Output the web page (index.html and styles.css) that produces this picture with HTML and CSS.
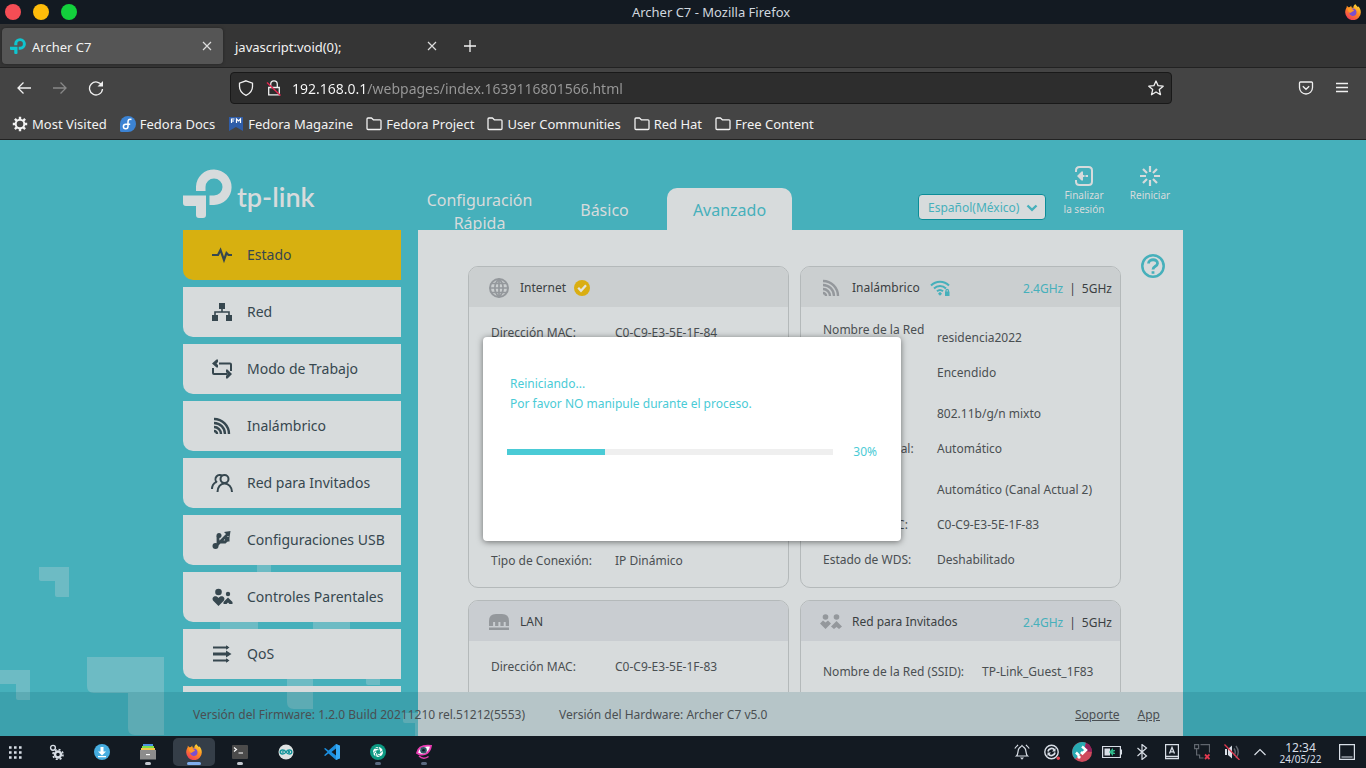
FILE: index.html
```html
<!DOCTYPE html>
<html lang="es">
<head>
<meta charset="utf-8">
<meta name="viewport" content="width=device-width, initial-scale=1">
<title>Archer C7</title>
<link rel="stylesheet" href="styles.css">
</head>
<body>
<svg class="defs" aria-hidden="true">
  <defs>
    <linearGradient id="ffBody" x1="0.8" y1="0" x2="0.2" y2="1"><stop offset="0" stop-color="#ffe13a"/><stop offset="0.45" stop-color="#ff8c1f"/><stop offset="1" stop-color="#f0335f"/></linearGradient>
    <symbol id="firefox" viewBox="0 0 16 16">
      <path fill="url(#ffBody)" d="M10.3 0c.4 1.200 1.600 1.900 2.700 3.200l.2-.9c1.700 1.700 2.600 3.700 2.600 6A7.800 7.700 0 0 1 .2 8.600C.1 6.300.9 4.400 1.700 3.200l.1-1.400 1.600 1.500 1.700-.2c.3-.9 1.200-1.300 1.200-1.300l.1 1.500 1.900.6C8.200 2.300 9.300.7 10.300 0z"/>
      <path fill="#7a4fd0" d="M6.500 4.800c3-.9 5.300 1.200 5 3.900-.2 2.400-2.300 3.600-4.300 3.200-2-.5-3.200-2-2.800-3.900 1 .8 2 .5 2.700-.2.700-.6 1.700-.5 1.700-1.100 0-.5-1.200-1.100-2.300-1.900z"/>
      <path fill="#ff9a25" d="M2.600 4.100c1.800-.2 3.400.2 4.500 1.400l1.600.6c.2.900-1.700 1-2 1.700-.6 1-1.800 1.500-2.600.4-.8-1-1.500-2.500-1.500-4.100z"/>
    </symbol>
    <symbol id="tplink" viewBox="0 0 49 49">
      <path d="M13 22v-4.500A17.800 17.800 0 1 1 31 36h-4.500V26.500H31A8.500 8.500 0 1 0 22.500 18v4z"/>
      <path d="M0 26.500h23V46a3 3 0 0 1-3 3h-4a3 3 0 0 1-3-3v-9H3a3 3 0 0 1-3-3z"/>
    </symbol>
    <symbol id="folder" viewBox="0 0 16 16"><path fill="none" stroke="currentColor" stroke-width="1.300" stroke-linejoin="round" d="M1 12.500V3q0-1 1-1h3.500l1.800 1.800H14q1 0 1 1v7.700q0 1-1 1H2q-1 0-1-1z"/></symbol>
    <symbol id="close" viewBox="0 0 10 10"><path d="M1 1l8 8M9 1L1 9" stroke="currentColor" stroke-width="1.200"/></symbol>
    <symbol id="rss" viewBox="0 0 18 18"><g fill="none" stroke="currentColor" stroke-width="2.400"><path d="M1 14a3 3 0 0 1 3 3M1 10a7 7 0 0 1 7 7M1 6a11 11 0 0 1 11 11M1 2a15 15 0 0 1 15 15"/></g></symbol>
  </defs>
</svg>

<header class="titlebar">
  <div class="lights">
    <button class="light red" aria-label="Cerrar"></button>
    <button class="light yellow" aria-label="Minimizar"></button>
    <button class="light green" aria-label="Maximizar"></button>
  </div>
  <span class="window-title">Archer C7 - Mozilla Firefox</span>
  <svg class="i16 title-icon"><use href="#firefox"/></svg>
</header>

<div class="tabstrip">
  <div class="tab current">
    <svg class="i16 cyan"><use href="#tplink"/></svg>
    <span class="tab-name">Archer C7</span>
    <button class="tab-close" aria-label="Cerrar pestaña"><svg class="i10"><use href="#close"/></svg></button>
  </div>
  <div class="tab">
    <span class="tab-name">javascript:void(0);</span>
    <button class="tab-close" aria-label="Cerrar pestaña"><svg class="i10"><use href="#close"/></svg></button>
  </div>
  <button class="new-tab" aria-label="Nueva pestaña"><svg class="i14" viewBox="0 0 14 14"><path d="M7 1v12M1 7h12" stroke="currentColor" stroke-width="1.300"/></svg></button>
</div>

<nav class="toolbar">
  <div class="nav-buttons">
    <button class="tool" aria-label="Atrás"><svg class="i16" viewBox="0 0 16 16"><path class="line" d="M15 8H2M7.500 2.500L2 8l5.500 5.500"/></svg></button>
    <button class="tool dim" aria-label="Adelante"><svg class="i16" viewBox="0 0 16 16"><path class="line" d="M1 8h13M8.500 2.500L14 8l-5.500 5.500"/></svg></button>
    <button class="tool" aria-label="Recargar"><svg class="i16" viewBox="0 0 16 16"><path class="line" d="M13.800 5.500A6.500 6.500 0 1 0 14.500 9"/><path fill="currentColor" d="M15 1v5.500H9.500z"/></svg></button>
  </div>
  <div class="urlbar">
    <svg class="i16" viewBox="0 0 16 16"><path class="line" d="M8 .8l6.500 2.400v3.300c0 4-2.500 7-6.500 8.800-4-1.800-6.500-4.800-6.500-8.800V3.200z"/></svg>
    <svg class="i16 lock" viewBox="0 0 16 16"><path class="line" d="M2.700 7.500h10.600v7.300H2.700zM4.700 7.500V4.200a3.300 3.300 0 0 1 6.600 0v3.300"/><path stroke="#e22850" stroke-width="1.400" d="M1 2.500l13.500 13"/></svg>
    <input class="url" type="text" aria-label="Dirección" value="192.168.0.1/webpages/index.1639116801566.html">
    <svg class="i16" viewBox="0 0 16 16"><path class="line" stroke-linejoin="round" d="M8 1l2.100 4.700 5.100.5-3.900 3.400 1.200 5.100L8 12l-4.500 2.700 1.200-5.100L.8 6.200l5.100-.5z"/></svg>
  </div>
  <div class="nav-end">
    <button class="tool" aria-label="Pocket"><svg class="i16" viewBox="0 0 16 16"><path class="line" d="M2.500 2h11q1 0 1 1v4.500a6.500 6.500 0 0 1-13 0V3q0-1 1-1zM4.800 6.200L8 9.300l3.200-3.100"/></svg></button>
    <button class="tool" aria-label="Menú"><svg class="i16" viewBox="0 0 16 16"><path class="line" d="M2 3.500h12M2 7.500h12M2 11.500h12"/></svg></button>
  </div>
</nav>

<nav class="bookmarks">
  <a href="#"><svg class="i16" viewBox="0 0 16 16"><circle cx="8" cy="8" r="4.300" fill="none" stroke="currentColor" stroke-width="2"/><path stroke="currentColor" stroke-width="2.400" d="M8 .8v3M8 12.200v3M.8 8h3M12.200 8h3M2.900 2.900L5 5M11 11l2.100 2.100M13.100 2.900L11 5M5 11l-2.100 2.100"/></svg>Most Visited</a>
  <a href="#"><svg class="i16" viewBox="0 0 16 16"><path fill="#3c83d3" d="M8 0a8 8 0 1 1 0 16H1.500Q0 16 0 14.500V8a8 8 0 0 1 8-8z"/><path fill="none" stroke="#fff" stroke-width="1.500" d="M11.500 3.500C9 2.500 8 4 8 6v4.500a2.300 2.300 0 1 1-2.300-2.300h4.500"/></svg>Fedora Docs</a>
  <a href="#"><svg class="i16" viewBox="0 0 16 16"><path fill="#2f5da8" d="M1 1h14v14l-7-4-7 4z"/><path fill="none" stroke="#fff" stroke-width="1.200" d="M3.500 7V3h3M3.500 5h2.500M8.500 7V3l2 2 2-2v4"/></svg>Fedora Magazine</a>
  <a href="#"><svg class="i16"><use href="#folder"/></svg>Fedora Project</a>
  <a href="#"><svg class="i16"><use href="#folder"/></svg>User Communities</a>
  <a href="#"><svg class="i16"><use href="#folder"/></svg>Red Hat</a>
  <a href="#"><svg class="i16"><use href="#folder"/></svg>Free Content</a>
</nav>

<div class="page">
  <svg class="pattern" viewBox="0 0 420 176" aria-hidden="true">
    <path d="M39 7h30v30H57q-2 0-2-2V21H41q-2 0-2-2zM0 110h30v30H18q-2 0-2-2v-14H0zM87 97h77v78h-29q-7 0-7-7v-35H94q-7 0-7-7zM257 0h14v20h-14zM220 60h38v12h-38zM313 60h37v12h-37zM287 115h26v34h-19q-7 0-7-7zM366 115h14v10h-12q-2 0-2-2zM403 153h15v23h-3v-13h-10q-2 0-2-2z"/>
  </svg>

  <div class="frame">
    <header class="top">
      <a class="brand" href="#" aria-label="tp-link"><svg class="brand-mark"><use href="#tplink"/></svg><span class="brand-name">tp-link</span></a>
      <nav class="modes">
        <a class="mode tall" href="#">Configuración Rápida</a>
        <a class="mode" href="#">Básico</a>
        <a class="mode active" href="#">Avanzado</a>
      </nav>
      <div class="tools">
        <label class="language">
          <select aria-label="Idioma"><option>Español(México)</option></select>
          <svg class="chevron" viewBox="0 0 12 8"><path fill="none" stroke="currentColor" stroke-width="2.400" d="M1.500 1.500L6 5.800l4.500-4.300"/></svg>
        </label>
        <button class="action"><svg class="i20" viewBox="0 0 20 20"><g fill="none" stroke="currentColor" stroke-width="2"><path d="M2 6V4.500Q2 1 5.500 1h9Q18 1 18 4.500v11q0 3.500-3.500 3.500h-9Q2 19 2 15.500V14"/><path d="M14 10h-2.500"/></g><path fill="currentColor" d="M3 10l4.500-4.500H9V9h1.500v2H9v3.500H7.500z"/></svg>Finalizar<br>la sesión</button>
        <button class="action"><svg class="i20" viewBox="0 0 20 20"><path stroke="currentColor" stroke-width="2.200" d="M10 0v6M10 14v6M0 10h6M14 10h6M3 3l4 4M13 13l4 4M17 3l-4 4M7 13l-4 4"/></svg>Reiniciar</button>
      </div>
    </header>

    <div class="columns">
      <nav class="side">
        <a class="side-item selected" href="#"><svg class="i22" viewBox="0 0 22 22"><path fill="none" stroke="currentColor" stroke-width="2.200" d="M1 11h6l2.500-5 3.500 10 2.500-7 2 2H21"/></svg>Estado</a>
        <a class="side-item" href="#"><svg class="i22" viewBox="0 0 22 22"><path fill="currentColor" d="M8 2h6v6H8zM1 14h6v6H1zM15 14h6v6h-6z"/><path fill="none" stroke="currentColor" stroke-width="1.600" d="M11 8v3M4 14v-3h14v3"/></svg>Red</a>
        <a class="side-item" href="#"><svg class="i22" viewBox="0 0 22 22"><path fill="none" stroke="currentColor" stroke-width="2" d="M2 10v5q0 1 1 1h13M8 5.500h11q1 0 1 1V13"/><path fill="currentColor" d="M1 5.500L5.500 1.500H7V4L5.500 5.500 7 7v2.500H5.500zM21 16l-4.500 4.500H15V18l1.500-2-1.500-2v-2.500h1.500z"/></svg>Modo de Trabajo</a>
        <a class="side-item" href="#"><svg class="i22" viewBox="-2 -2 22 22"><use href="#rss" width="18" height="18"/></svg>Inalámbrico</a>
        <a class="side-item" href="#"><svg class="i22" viewBox="0 0 22 22"><g fill="none" stroke="currentColor" stroke-width="2"><path d="M1 17c0-3 1.500-5.500 4-7M6 10.500A4.200 4.200 0 1 1 11.500 4"/><circle cx="13.500" cy="7" r="4"/><path d="M6.500 20c0-5 3-8.500 7-8.500s7.500 3.500 7.500 8.500"/></g></svg>Red para Invitados</a>
        <a class="side-item" href="#"><svg class="i22" viewBox="0 0 22 22"><path fill="none" stroke="currentColor" stroke-width="2.800" d="M4 18L17 5M7 15V7M9 13h5l2-2"/><path fill="currentColor" d="M19.500 2l-1 6.500-5.500-5.500z"/><circle cx="4.500" cy="17" r="3" fill="currentColor"/><circle cx="8" cy="6.500" r="2.500" fill="currentColor"/><path fill="currentColor" d="M14 8h4.500v4.500H14z"/></svg>Configuraciones USB</a>
        <a class="side-item" href="#"><svg class="i22" viewBox="0 0 22 22"><g fill="currentColor"><circle cx="7.500" cy="6" r="3.300"/><path d="M7.500 20l-5.500-5.500c-2-3.500 3-6 5.500-2.500 2.500-3.500 7.500-1 5.500 2.500z"/><circle cx="17" cy="8" r="2.200"/><path d="M17 11.500l4.500 4.500v2h-3l-1.500-1.500-1.500 1.500h-3v-2z"/></g></svg>Controles Parentales</a>
        <a class="side-item" href="#"><svg class="i22" viewBox="0 0 22 22"><path stroke="currentColor" stroke-width="2.200" d="M2 4.500h15M2 17.500h15"/><path stroke="currentColor" stroke-width="3" d="M2 11h15"/><path fill="currentColor" d="M15 2.300l3.500 2.200L15 6.700zM15 7.500L20.500 11 15 14.500zM15 15.300l3.500 2.200-3.500 2.200z"/></svg>QoS</a>
        <span class="side-item"></span>
      </nav>

      <main class="main">
        <div class="cards">
          <section class="card">
            <h2><span class="card-icon"><svg class="i20" viewBox="0 0 20 20"><circle cx="10" cy="10" r="9" fill="none" stroke="currentColor" stroke-width="2"/><path fill="none" stroke="currentColor" stroke-width="1.700" d="M1 10h18M3 5.500h14M3 14.500h14M10 1v18M10 1C4.500 6 4.500 14 10 19M10 1c5.500 5 5.500 13 0 18"/></svg></span>Internet<svg class="i16 ok" viewBox="0 0 16 16"><circle cx="8" cy="8" r="8" fill="#daae12"/><path fill="none" stroke="#e4e4dc" stroke-width="2.300" d="M4.200 7.800l2.800 3 5-5.500"/></svg></h2>
            <dl class="rows spread">
              <div class="row"><dt>Dirección MAC:</dt><dd>C0-C9-E3-5E-1F-84</dd></div>
              <div class="row"><dt>Tipo de Conexión:</dt><dd>IP Dinámico</dd></div>
            </dl>
          </section>

          <section class="card">
            <h2><span class="card-icon"><svg class="i18"><use href="#rss"/></svg></span>Inalámbrico<svg class="i20 wifi" viewBox="0 0 20 20"><path fill="none" stroke="currentColor" stroke-width="2" d="M1 7.500a12.500 12.500 0 0 1 18 0M4 10.500a8.500 8.500 0 0 1 12 0M7 13.300a4.500 4.500 0 0 1 6 0"/><path fill="currentColor" d="M10 13.800l2 2-2 2-2-2zM15 13.500h4.500V18H15z"/><path fill="none" stroke="currentColor" stroke-width="1.200" d="M16 14v-1.500a1.200 1.200 0 0 1 2.400 0V14"/></svg>
              <span class="bands"><a class="band on" href="#">2.4GHz</a><span>|</span><a class="band" href="#">5GHz</a></span></h2>
            <dl class="rows">
              <div class="row"><dt>Nombre de la Red (SSID):</dt><dd>residencia2022</dd></div>
              <div class="row"><dt></dt><dd>Encendido</dd></div>
              <div class="row wide"><dt></dt><dd>802.11b/g/n mixto</dd></div>
              <div class="row"><dt>Ancho de Canal:</dt><dd>Automático</dd></div>
              <div class="row wide"><dt></dt><dd>Automático (Canal Actual 2)</dd></div>
              <div class="row"><dt>Dirección MAC:</dt><dd>C0-C9-E3-5E-1F-83</dd></div>
              <div class="row"><dt>Estado de WDS:</dt><dd>Deshabilitado</dd></div>
            </dl>
          </section>

          <section class="card cool">
            <h2><span class="card-icon"><svg class="i20" viewBox="0 0 20 20"><path fill="currentColor" d="M0 14V9q0-7 7-7h6q7 0 7 7v5h-3.300v-4h-2v4h-3.300v-4h-2v4H6.100v-4h-2v4zM0 15.500h20V18H0z"/></svg></span>LAN</h2>
            <dl class="rows spread">
              <div class="row"><dt>Dirección MAC:</dt><dd>C0-C9-E3-5E-1F-83</dd></div>
            </dl>
          </section>

          <section class="card cool">
            <h2><span class="card-icon"><svg class="i22" viewBox="0 0 22 22"><g fill="currentColor"><circle cx="5.500" cy="6" r="2.800"/><circle cx="16.500" cy="6" r="2.800"/><path d="M5.500 18L0 12.500 3 9.500l2.500 2 2.500-2 3 3zM16.500 10l5.500 5.500-3 2.500-2.500-2-2.500 2-3-2.500z"/></g></svg></span>Red para Invitados
              <span class="bands"><a class="band on" href="#">2.4GHz</a><span>|</span><a class="band" href="#">5GHz</a></span></h2>
            <dl class="rows guest">
              <div class="row"><dt>Nombre de la Red (SSID):</dt><dd>TP-Link_Guest_1F83</dd></div>
            </dl>
          </section>
        </div>
        <button class="help" aria-label="Ayuda"><svg class="i24" viewBox="0 0 24 24"><g fill="none" stroke="currentColor"><circle cx="12" cy="12" r="10.700" stroke-width="2.500"/><path stroke-width="2.800" d="M7.500 9.500c.2-5 9.200-5 9 0-.1 3-4.500 2.500-4.500 6M12 17.200v2.500"/></g></svg></button>
      </main>
    </div>
  </div>

  <footer class="foot">
    <div class="foot-in">
      <span>Versión del Firmware: 1.2.0 Build 20211210 rel.51212(5553)</span>
      <span>Versión del Hardware: Archer C7 v5.0</span>
      <span class="foot-links"><a href="#">Soporte</a><a href="#">App</a></span>
    </div>
  </footer>

  <div class="dialog" role="dialog" aria-labelledby="dlg-text">
    <p id="dlg-text">Reiniciando...<br>Por favor NO manipule durante el proceso.</p>
    <div class="progress">
      <div class="track"><div class="fill" style="width: 30%"></div></div>
      <span>30%</span>
    </div>
  </div>
</div>

<footer class="taskbar">
  <button class="menu" aria-label="Aplicaciones"><svg class="i16" viewBox="0 0 16 16"><path stroke="#d8dee6" stroke-width="2.600" stroke-dasharray="2.600 2.400" d="M2 3.500h13M2 8.500h13M2 13.500h13"/></svg></button>
  <button class="app" aria-label="Configuración"><svg class="i16" viewBox="0 0 16 16"><g fill="none" stroke="#d8dee6"><circle cx="10" cy="10.500" r="3" stroke-width="2.400"/><circle cx="10" cy="10.500" r="5" stroke-width="1.600" stroke-dasharray="2 1.930"/><circle cx="5" cy="3.800" r="2.400" stroke-width="1.400"/></g></svg></button>
  <button class="app" aria-label="Descargas"><svg class="i16" viewBox="0 0 16 16"><circle cx="8" cy="8" r="8" fill="#46ade0"/><path fill="#fff" d="M6.500 3h3v4.500H12L8 11.500l-4-4h2.500zM4 12h8v1.200H4z"/></svg></button>
  <button class="app run" aria-label="Archivos"><svg class="i16" viewBox="0 0 16 16"><path fill="#4a90e2" d="M3 0h10v2H3z"/><path fill="#7fe04a" d="M2 2h12v2H2z"/><path fill="#f3c64c" d="M1 4h14v2H1z"/><path fill="#8c8c8c" d="M0 6h16v9.500H0z"/><path fill="#fff" d="M6 10h4v1.200H6z"/></svg></button>
  <button class="app run focus" aria-label="Firefox"><svg class="i16"><use href="#firefox"/></svg></button>
  <button class="app run" aria-label="Terminal"><svg class="i16" viewBox="0 0 16 16"><rect y="1" width="16" height="14" rx="1" fill="#4b4b4b"/><path fill="none" stroke="#fff" stroke-width="1.200" d="M2 3.500l2.500 2L2 7.500M6.500 9H11"/></svg></button>
  <button class="app" aria-label="Arduino"><svg class="i16" viewBox="0 0 16 16"><circle cx="8" cy="8" r="7.500" fill="#dfe3e3"/><path fill="none" stroke="#14959b" stroke-width="1.400" d="M8 8c-1.500-2.600-5.800-2.600-5.800 0s4.300 2.600 5.800 0 5.800-2.600 5.800 0-4.300 2.600-5.800 0M3.800 8h2M10 8h2M11 7v2"/></svg></button>
  <button class="app" aria-label="Code"><svg class="i16" viewBox="0 0 16 16"><path fill="#1c8ede" d="M12 0l4 1.700v12.600L12 16 4.500 9.500 1.200 12 0 11.300 3.500 8 0 4.700 1.200 4l3.300 2.500zm0 4.500L7.500 8l4.500 3.500z"/><path fill="#35a9f5" d="M12 0l4 1.700v12.600L12 16z"/></svg></button>
  <button class="app run quiet" aria-label="Obturador"><svg class="i16" viewBox="0 0 16 16"><circle cx="8" cy="8" r="8" fill="#0d9a83"/><circle cx="8" cy="8" r="3.500" fill="none" stroke="#fff" stroke-width="3"/><path stroke="#0d9a83" stroke-width=".9" d="M8 2.500L10 8M13.500 6L9 10M11.500 13L7 10.500M6 13.500L5.500 9M2.500 10L6 6.500M4 4l5 1"/></svg></button>
  <button class="app run quiet" aria-label="Visor"><svg class="i16" viewBox="0 0 16 16"><path fill="#fff" stroke="#e83bb2" stroke-width="1.800" d="M1 9C2 3 7 1 15 1.800c-.5 3-2 6.500-5.500 8.200C6 11.200 3 10.500 1 9z"/><circle cx="7.500" cy="6.300" r="3.300" fill="#2d5662"/><circle cx="7.500" cy="6.300" r="1.300" fill="#101b24"/><path fill="none" stroke="#e83bb2" stroke-width="1.500" d="M3 12c3 3 7 2.500 9.500.5"/></svg></button>
  <div class="tray">
    <button class="tr" aria-label="Notificaciones"><svg class="i16" viewBox="0 0 16 16"><path fill="none" stroke="#d8dee6" stroke-width="1.200" d="M2.500 12c2-1.500 1-6 2.500-7.500C6 3 7 3 8 1.500 9 3 10 3 11 4.500c1.500 1.500.5 6 2.500 7.500zM2.800 2L.8 4.500M13.200 2l2 2.500M4 .8L3 2M12 .8L13 2"/><path fill="#d8dee6" d="M6 13.500h4L8 15.800z"/></svg></button>
    <button class="tr" aria-label="Actualizaciones"><svg class="i16" viewBox="0 0 16 16"><g fill="none" stroke="#d8dee6"><circle cx="7.500" cy="8" r="6.700" stroke-width="1.400"/><path stroke-width="1.800" d="M4 7.500a3.600 3.600 0 0 1 6.500-1.500M11 8.500A3.600 3.600 0 0 1 4.500 10"/></g><path fill="#d8dee6" d="M11.500 4v3.500H8zM3.500 12V8.500H7z"/><circle cx="14.300" cy="14.300" r="1.700" fill="#e2434f"/></svg></button>
    <button class="tr" aria-label="Ayuda"><svg class="i20" viewBox="0 0 20 20"><circle cx="10" cy="10" r="10" fill="#cf4a5c"/><path fill="#27aab2" d="M3 17A10 10 0 0 1 14 .8L12 9z"/><path fill="#93205a" d="M14 .8A10 10 0 0 1 20 10l-8-1z"/><path fill="none" stroke="#fff" stroke-width="2.500" d="M10 4.500l4 3.500-3.500 3.500L9 10M4 10.500l3 3"/><circle cx="7" cy="15" r="1.700" fill="#fff"/></svg></button>
    <button class="tr" aria-label="Batería"><svg class="i20" viewBox="0 0 20 20"><path fill="none" stroke="#d8dee6" stroke-width="1.200" d="M.6 4.500h17.800v11H.6zM18.500 8h1v4h-1"/><path fill="#d8dee6" d="M2.500 6.500H8v7H2.500z"/><path fill="#2fb98a" d="M7 10l4-4v2h2v1.300h-1.500v1.400H13V12h-2v2z"/></svg></button>
    <button class="tr" aria-label="Bluetooth"><svg class="i16" viewBox="0 0 16 16"><path fill="none" stroke="#d8dee6" stroke-width="1.200" d="M3.500 4l9 8L8 15.500V.5L12.500 4l-9 8"/></svg></button>
    <button class="tr" aria-label="Teclado"><svg class="i16" viewBox="0 0 16 16"><path fill="none" stroke="#d8dee6" stroke-width="1.200" d="M1.600.6h12.800v14H1.600z"/><path fill="none" stroke="#d8dee6" stroke-width="1.300" d="M5.500 9.500L8 3.500l2.500 6M6.500 7.800h3M2 12.500h12"/></svg></button>
    <button class="tr" aria-label="Red"><svg class="i16" viewBox="0 0 16 16"><path fill="none" stroke="#60666e" stroke-width="1.200" d="M.6.6h4v4h-4zM6.500.6h9v8M2.600 5v6h3v3h4"/><path stroke="#e23950" stroke-width="1.800" d="M11 10.500l4.500 4.500M15.500 10.500L11 15"/></svg></button>
    <button class="tr" aria-label="Volumen"><svg class="i16" viewBox="0 0 16 16"><path fill="#d8dee6" d="M1 5h2v6H1zM4 5l4-3.500v13L4 11z"/><path fill="none" stroke="#60666e" stroke-width="1.400" d="M10 4.500q2.500 3.500 0 7M12 2q4.500 6 0 12"/><path stroke="#e23950" stroke-width="1.300" d="M.5.500L15.500 16"/></svg></button>
    <button class="tr narrow" aria-label="Mostrar ocultos"><svg class="i14" viewBox="0 0 14 14"><path fill="none" stroke="#d8dee6" stroke-width="1.200" d="M1.500 10L7 4.500l5.500 5.500"/></svg></button>
  </div>
  <div class="clock"><time class="hour">12:34</time><time class="date">24/05/22</time></div>
  <button class="desk" aria-label="Mostrar escritorio"><svg class="i16" viewBox="0 0 16 16"><path fill="none" stroke="#d8dee6" stroke-width="1.200" d="M.6.6h14.800v14.800H.6zM2.500 13h11"/></svg></button>
</footer>
</body>
</html>
```
FILE: styles.css
```css
* { box-sizing: border-box; }

body {
  margin: 0;
  height: 100vh;
  overflow: hidden;
  display: flex;
  flex-direction: column;
  font: 12px/20px "Noto Sans", sans-serif;
  background: #131a22;
}

button {
  margin: 0;
  padding: 0;
  border: 0;
  background: none;
  color: inherit;
  font: inherit;
}

a { color: inherit; text-decoration: none; }
svg { display: block; flex: none; fill: currentColor; }

.defs { position: absolute; width: 0; height: 0; }
.i10 { width: 10px; height: 10px; }
.i14 { width: 14px; height: 14px; }
.i16 { width: 16px; height: 16px; }
.i18 { width: 18px; height: 18px; }
.i20 { width: 20px; height: 20px; }
.i22 { width: 22px; height: 22px; }
.i24 { width: 24px; height: 24px; }
.line { fill: none; stroke: currentColor; stroke-width: 1.3; }

/* Window title */
.titlebar {
  flex: none;
  height: 24px;
  padding: 0 5px;
  display: grid;
  grid-template-columns: 1fr auto 1fr;
  align-items: center;
  background: #131a22;
  color: #d0d7df;
  font-size: 13px;
}
.lights { display: flex; gap: 12px; }
.light { width: 16px; height: 16px; border-radius: 50%; }
.red { background: #f54d55; }
.yellow { background: #febc0a; }
.green { background: #13d13c; }
.window-title { padding-left: 56px; }
.title-icon { justify-self: end; }

/* Tabs */
.tabstrip {
  flex: none;
  height: 44px;
  padding: 4px 2px;
  display: flex;
  align-items: flex-start;
  gap: 4px;
  background: #353535;
  border-bottom: 1px solid #222;
  color: #f2f2f2;
  font-size: 13px;
}
.tab {
  width: 221px;
  height: 36px;
  padding: 0 11px 0 8px;
  display: flex;
  align-items: center;
  gap: 6px;
  border-radius: 4px;
}
.current { background: #555; box-shadow: 0 0 3px #222; }
.cyan { color: #0fc5cf; }
.tab-name { flex: 1; padding-top: 2px; }
.tab-close { color: #ddd; }
.new-tab { width: 36px; height: 36px; display: grid; place-items: center; }

/* Navigation bar */
.toolbar {
  flex: none;
  height: 40px;
  display: flex;
  align-items: center;
  background: #444;
  color: #f0f0f0;
}
.nav-buttons { width: 230px; padding-left: 6px; display: flex; }
.tool { width: 36px; height: 32px; display: grid; place-items: center; }
.dim { color: #888; }
.urlbar {
  flex: 1;
  height: 32px;
  padding: 0 7px;
  display: flex;
  align-items: center;
  gap: 12px;
  background: #2d2d2d;
  border: 1px solid #191919;
  border-radius: 4px;
}
.url {
  flex: 1;
  min-width: 0;
  height: 28px;
  margin-left: -2px;
  padding: 0;
  border: 0;
  outline: 0;
  font: 14px/20px "Noto Sans", sans-serif;
  color: transparent;
  background: linear-gradient(90deg, #fbfbfb 75px, #999 75px);
  -webkit-background-clip: text;
  background-clip: text;
}
.nav-end { width: 194px; padding-right: 6px; display: flex; justify-content: flex-end; }

.bookmarks {
  flex: none;
  height: 32px;
  padding: 0 12px;
  display: flex;
  align-items: center;
  gap: 13px;
  background: #444;
  border-bottom: 1px solid #222;
  color: #f2f2f2;
  font-size: 13px;
}
.bookmarks a { display: flex; align-items: center; gap: 4px; white-space: nowrap; }

/* Router page */
.page {
  position: relative;
  flex: 1;
  min-height: 0;
  overflow: hidden;
  background: #46b0bb;
  color: #4a4f52;
}
.pattern {
  position: absolute;
  left: 0;
  bottom: 0;
  width: 420px;
  height: 176px;
  fill: #d7dbdc;
  opacity: 0.27;
}
.frame {
  position: relative;
  width: min(1000px, 100%);
  height: 100%;
  margin: 0 auto;
  display: flex;
  flex-direction: column;
}
.top { flex: none; height: 90px; display: flex; color: #d7dbdc; }
.brand { width: 234px; padding-top: 29px; display: flex; align-items: flex-start; gap: 5px; }
.brand-mark { width: 49px; height: 49px; }
.brand-name { font: 600 27px/55px Lato, sans-serif; }

.modes { display: flex; align-items: flex-end; font-size: 16px; line-height: 23px; text-align: center; }
.mode {
  width: 125px;
  height: 42px;
  padding-top: 2px;
  overflow: hidden;
  display: flex;
  align-items: center;
  justify-content: center;
}
.tall { padding-top: 1px; align-items: flex-start; }
.active { background: #d7dbdc; color: #46b0bb; border-radius: 10px 10px 0 0; }

.tools { flex: 1; display: flex; justify-content: flex-end; }
.language { position: relative; margin: 54px 16px 0 0; height: 26px; color: #46b0bb; }
.language select {
  width: 128px;
  height: 26px;
  padding: 1px 9px 0;
  appearance: none;
  border: 1px solid #0b8d98;
  border-radius: 4px;
  background: #d7dbdc;
  color: #46b0bb;
  font: 12px/20px "Noto Sans", sans-serif;
}
.chevron { position: absolute; right: 8px; top: 10px; width: 12px; height: 8px; pointer-events: none; }
.action {
  align-self: flex-start;
  width: 44px;
  margin-right: 22px;
  padding-top: 26px;
  display: block;
  font-size: 10px;
  line-height: 14px;
  text-align: center;
}
.action:last-of-type { margin-right: 11px; }
.action svg { margin: 0 auto 2px; }

.columns { flex: 1; min-height: 0; display: flex; gap: 17px; }
.side {
  width: 218px;
  margin-bottom: 44px;
  overflow: hidden;
  display: flex;
  flex-direction: column;
  gap: 7px;
}
.side-item {
  flex: none;
  height: 50px;
  padding-left: 28px;
  display: flex;
  align-items: center;
  gap: 14px;
  border-radius: 0 0 0 10px;
  background: #d7dbdc;
  color: #36474f;
  font-size: 14px;
  white-space: nowrap;
}
.selected { background: #d7b010; }

.main {
  flex: 1;
  display: flex;
  align-items: flex-start;
  gap: 20px;
  padding: 0 18px 44px 50px;
  background: #d7dbdc;
}
.cards {
  flex: 1;
  height: 100%;
  padding-top: 36px;
  overflow: hidden;
  display: grid;
  grid-template-columns: 1fr 1fr;
  grid-auto-rows: max-content;
  align-content: start;
  gap: 12px 11px;
}
.card {
  min-height: 130px;
  display: flex;
  flex-direction: column;
  border: 1px solid #b4b9ba;
  border-radius: 10px;
}
.card h2 {
  flex: none;
  height: 40px;
  margin: 0;
  padding: 1px 8px 0 19px;
  display: flex;
  align-items: center;
  border-radius: 9px 9px 0 0;
  font-size: 12px;
  font-weight: 400;
  color: #3b3f42;
  background: #cbcfd0;
}
.cool h2 { background: #c9cdd1; }
.card-icon { width: 32px; color: #94989c; }
.card-icon .i20 { margin-left: 1px; }
.card-icon .i18 { margin-left: 2px; }
.ok { margin-left: 8px; }
.wifi { margin-left: 10px; color: #46b0bb; }
.bands { margin-left: auto; padding-top: 2px; display: flex; gap: 6px; }
.on { color: #46b0bb; }

.rows {
  flex: 1;
  margin: 0;
  padding: 21px 0 17px 22px;
  display: flex;
  flex-direction: column;
  gap: 15px;
}
.row { height: 20px; display: flex; align-items: center; }
.wide { margin-top: 6px; }
.row dt { width: 114px; padding-right: 12px; line-height: 16px; }
.row dd { margin: 0; }
.spread { padding: 16px 0 16px 22px; justify-content: space-between; }
.spread dt { width: 124px; }
.guest dt { width: 159px; }

.help { margin-top: 24px; color: #46b0bb; }

.foot {
  position: absolute;
  left: 0;
  right: 0;
  bottom: 0;
  background: rgba(14, 88, 99, 0.16);
}
.foot-in {
  width: min(1000px, 100%);
  height: 44px;
  margin: 0 auto;
  padding: 2px 23px 0 10px;
  display: flex;
  align-items: center;
  gap: 34px;
}
.foot-links { margin-left: auto; display: flex; gap: 18px; }
.foot-links a { text-decoration: underline; }

.dialog {
  position: absolute;
  left: calc(50% - 200px);
  top: 197px;
  width: 418px;
  height: 204px;
  padding: 37px 24px;
  background: #fff;
  border-radius: 4px;
  box-shadow: 0 1px 6px rgba(0, 0, 0, 0.5);
  color: #4acbd6;
}
.dialog p { margin: 0 0 28px 3px; }
.progress { display: flex; align-items: center; gap: 20px; }
.track { flex: 1; height: 6px; background: #efefef; }
.fill { height: 100%; background: #4acbd6; }

/* Desktop panel */
.taskbar {
  flex: none;
  height: 32px;
  display: flex;
  align-items: center;
  background: #131a22;
  color: #d8dee6;
}
.menu { width: 33px; padding-left: 7px; }
.app {
  position: relative;
  width: 42px;
  height: 28px;
  margin: 0 2px;
  display: grid;
  place-items: center;
  border-radius: 5px;
}
.app:nth-child(2) { margin-left: 0; }
.menu + .app { margin-left: 2px; }
.focus { background: #353e48; }
.run::after {
  content: "";
  position: absolute;
  left: 18px;
  bottom: 1px;
  width: 6px;
  height: 3px;
  border-radius: 2px;
  background: #c3c8cf;
}
.focus::after { left: 14px; width: 14px; background: #7faeee; }
.quiet::after { background: #5b6a80; }
.tray { margin-left: auto; display: flex; }
.tr { width: 30px; height: 32px; display: grid; place-items: center; }
.narrow { width: 26px; }
.clock { width: 55px; display: grid; justify-items: center; }
.hour { font-size: 12px; line-height: 13px; }
.date { font-size: 10px; line-height: 10px; }
.desk { width: 38px; display: grid; place-items: center; }
```
